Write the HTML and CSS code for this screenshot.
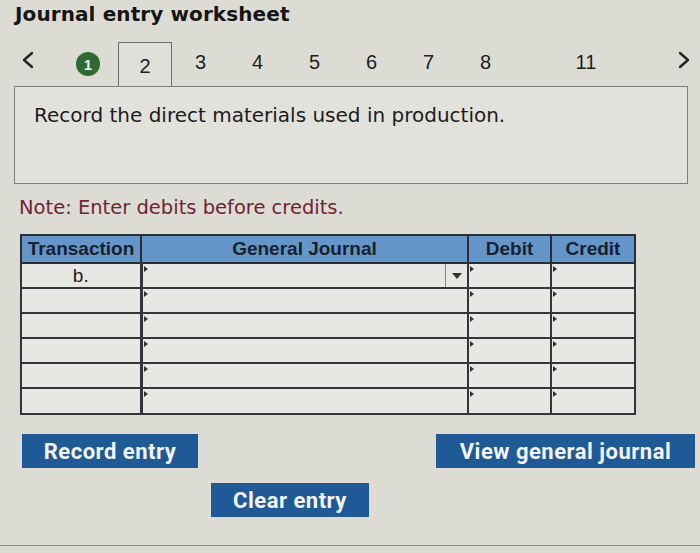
FILE: index.html
```html
<!DOCTYPE html>
<html>
<head>
<meta charset="utf-8">
<link rel="stylesheet" href="styles.css">
</head>
<body>
<div class="page">
  <h1 class="title">Journal entry worksheet</h1>
  <div class="nav">
    <span class="arrow prev">
      <svg width="14" height="20" viewBox="0 0 14 20"><path d="M11 3 L3 10 L11 17" fill="none" stroke="#222" stroke-width="2.4" stroke-linecap="round" stroke-linejoin="round"/></svg>
    </span>
    <span class="step done"><span class="badge">1</span></span>
    <span class="step current">2</span>
    <span class="step">3</span>
    <span class="step">4</span>
    <span class="step">5</span>
    <span class="step">6</span>
    <span class="step">7</span>
    <span class="step">8</span>
    <span class="step wide">11</span>
    <span class="arrow next">
      <svg width="14" height="20" viewBox="0 0 14 20"><path d="M3 3 L11 10 L3 17" fill="none" stroke="#222" stroke-width="2.4" stroke-linecap="round" stroke-linejoin="round"/></svg>
    </span>
  </div>
  <div class="prompt">Record the direct materials used in production.</div>
  <p class="note">Note: Enter debits before credits.</p>
  <table class="journal">
    <thead>
      <tr>
        <th class="c-tr">Transaction</th>
        <th class="c-gj">General Journal</th>
        <th class="c-dr">Debit</th>
        <th class="c-cr">Credit</th>
      </tr>
    </thead>
    <tbody>
      <tr>
        <td class="tr">b.</td>
        <td class="in gj"><span class="dd"><svg width="10" height="6" viewBox="0 0 10 6"><path d="M0 0 H10 L5 6 Z" fill="#333"/></svg></span></td>
        <td class="in"></td>
        <td class="in"></td>
      </tr>
      <tr><td class="tr"></td><td class="in"></td><td class="in"></td><td class="in"></td></tr>
      <tr><td class="tr"></td><td class="in"></td><td class="in"></td><td class="in"></td></tr>
      <tr><td class="tr"></td><td class="in"></td><td class="in"></td><td class="in"></td></tr>
      <tr><td class="tr"></td><td class="in"></td><td class="in"></td><td class="in"></td></tr>
      <tr><td class="tr"></td><td class="in"></td><td class="in"></td><td class="in"></td></tr>
    </tbody>
  </table>
  <div class="actions">
    <button class="btn">Record entry</button>
    <button class="btn">View general journal</button>
  </div>
  <div class="actions2">
    <button class="btn">Clear entry</button>
  </div>
  <div class="footer-line"></div>
</div>
</body>
</html>
```
FILE: styles.css
```css
html, body {
  margin: 0;
  padding: 0;
  background: #dcdcd5;
}
.page {
  width: 700px;
  height: 553px;
  overflow: hidden;
  display: flex;
  flex-direction: column;
  font-family: "DejaVu Sans", Verdana, sans-serif;
  color: #1b1b1b;
}
.title {
  margin: 0;
  padding: 1px 0 0 15px;
  height: 42px;
  box-sizing: border-box;
  font-size: 20px;
  font-weight: bold;
  line-height: 26px;
  letter-spacing: 0.1px;
  color: #151515;
}
.nav {
  display: flex;
  align-items: stretch;
  height: 44px;
  font-family: "Liberation Sans", Arial, sans-serif;
  font-size: 20px;
  color: #1e1e1e;
}
.arrow {
  display: flex;
  align-items: center;
  padding-bottom: 8px;
}
.prev {
  margin-left: 21px;
  width: 39px;
}
.next {
  margin-left: auto;
  margin-right: 9px;
}
.step {
  width: 57px;
  display: flex;
  align-items: center;
  justify-content: center;
  padding-bottom: 4px;
}
.step.done {
  width: 56px;
  padding-bottom: 0;
}
.badge {
  width: 24px;
  height: 24px;
  border-radius: 50%;
  background: #2f6a31;
  color: #eef3ea;
  font-size: 15px;
  font-weight: bold;
  display: flex;
  align-items: center;
  justify-content: center;
}
.step.current {
  width: 54px;
  margin-left: 2px;
  box-sizing: border-box;
  border: 1px solid #6d6d6d;
  border-bottom: none;
  background: #e0e0da;
  padding: 4px 0 0 0;
}
.step.wide {
  width: 144px;
}
.prompt {
  margin: 0 12px 0 14px;
  height: 98px;
  box-sizing: border-box;
  border: 1px solid #7f7f7f;
  background: #e2e2dc;
  padding: 16px 0 0 19px;
  font-size: 20px;
  line-height: 24px;
  color: #1c1c1c;
}
.note {
  margin: 12px 0 0 19px;
  font-size: 19.5px;
  line-height: 24px;
  color: #6e2630;
}
.journal {
  margin: 14px 0 0 20px;
  width: 614px;
  border-collapse: collapse;
  border: 2px solid #2c2c34;
  font-family: "Liberation Sans", Arial, sans-serif;
  table-layout: fixed;
}
.journal th {
  background: #6496ca;
  color: #18212e;
  font-size: 19px;
  font-weight: bold;
  height: 26px;
  padding: 0;
  border: 2px solid #2c2c34;
  line-height: 22px;
}
.c-tr { width: 118px; }
.c-gj { width: 325px; }
.c-dr { width: 81px; }
.c-cr { width: 82px; }
.journal td {
  height: 23px;
  padding: 0;
  border: 2px solid #34343c;
  background: #e7e7e3;
  position: relative;
}
.journal tbody tr:last-child td {
  height: 24px;
}
.journal td.tr {
  text-align: center;
  font-size: 19px;
  color: #1e1e1e;
  border-right-width: 3px;
}
.journal td.in::before {
  content: "";
  position: absolute;
  left: 1px;
  top: 2px;
  border-left: 4px solid #333;
  border-top: 3px solid transparent;
  border-bottom: 3px solid transparent;
}
.dd {
  position: absolute;
  right: 0;
  top: 0;
  bottom: 0;
  width: 21px;
  border-left: 1px solid #8a8a8a;
  display: flex;
  align-items: center;
  justify-content: center;
}
.actions {
  display: flex;
  justify-content: space-between;
  margin: 19px 5px 0 22px;
}
.actions2 {
  display: flex;
  margin: 15px 0 0 211px;
}
.btn {
  font-family: Roboto, "Liberation Sans", Arial, sans-serif;
  font-weight: bold;
  font-size: 22px;
  letter-spacing: 0.5px;
  color: #f2f4f7;
  background: #1f5a96;
  border: none;
  height: 34px;
  padding: 0;
  cursor: pointer;
}
.actions .btn:first-child { width: 176px; }
.actions .btn:last-child { width: 259px; }
.actions2 .btn { width: 158px; }
.footer-line {
  margin-top: 28px;
  height: 1px;
  background: #8e8e88;
}
```
